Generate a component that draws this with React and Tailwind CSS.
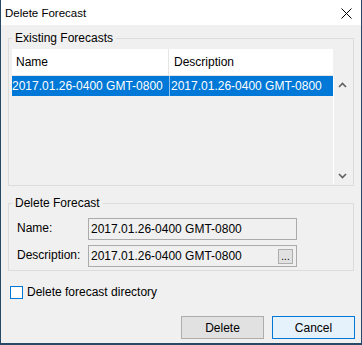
import React from "react";

function Chevron({ up }) {
  return (
    <svg width="9" height="6" viewBox="0 0 9 6">
      <polyline
        points={up ? "1,5 4.5,1.5 8,5" : "1,1 4.5,4.5 8,1"}
        fill="none"
        stroke="#606060"
        strokeWidth="1.6"
      />
    </svg>
  );
}

export default function App() {
  const font = { fontFamily: '"Liberation Sans", Arial, sans-serif' };
  return (
    <div
      className="w-[362px] h-[345px] flex flex-col bg-[#f0f0f0] border-l border-r border-b-2 border-[#264a66] text-[12px] text-black overflow-hidden"
      style={font}
    >
      {/* Title bar */}
      <div className="h-[25px] shrink-0 bg-white flex items-center justify-between pl-[4px] pr-[9px]">
        <span className="text-[11.5px] leading-[14px]">Delete Forecast</span>
        <svg width="11" height="11" viewBox="0 0 11 11" className="mt-[2px]">
          <path d="M0.5 0.5 L10.5 10.5 M10.5 0.5 L0.5 10.5" stroke="#000" strokeWidth="1" fill="none" />
        </svg>
      </div>

      {/* Existing Forecasts */}
      <fieldset className="mt-[6px] ml-[7px] w-[346px] border border-[#dcdcdc] pl-[3px] pr-[3px] pt-[4px] pb-[1px]">
        <legend className="px-[3px] leading-[14px]">Existing Forecasts</legend>
        <div className="h-[135px] flex">
          <div className="w-[321px] flex flex-col">
            <div className="h-[27px] flex bg-white border-b border-[#e5e5e5]">
              <div className="w-[157px] border-r border-[#e5e5e5] pl-[4px] flex items-center">Name</div>
              <div className="flex-1 pl-[5px] flex items-center">Description</div>
            </div>
            <div className="h-[20px] flex bg-[#0078d7] text-white">
              <div className="w-[158px] border-r border-[#8fc1ea] flex items-center whitespace-nowrap">
                2017.01.26-0400 GMT-0800
              </div>
              <div className="flex-1 pl-[1px] flex items-center whitespace-nowrap">
                2017.01.26-0400 GMT-0800
              </div>
            </div>
          </div>
          <div className="w-[17px] flex flex-col">
            <div className="h-[27px]" />
            <div className="flex-1 border-l border-white flex flex-col justify-between">
              <div className="h-[17px] flex items-center justify-center">
                <Chevron up />
              </div>
              <div className="h-[17px] flex items-center justify-center">
                <Chevron />
              </div>
            </div>
          </div>
        </div>
      </fieldset>

      {/* Delete Forecast group */}
      <fieldset className="mt-[10px] ml-[7px] w-[346px] border border-[#dcdcdc] pl-[3px] pr-[3px] pt-[8px] pb-[3px]">
        <legend className="px-[3px] leading-[14px]">Delete Forecast</legend>
        <div className="pl-[5px] flex flex-col gap-[5px]">
          <div className="flex items-center">
            <span className="w-[71px] pb-[2px]">Name:</span>
            <div className="w-[209px] h-[22px] border border-[#ababab] bg-[#f0f0f0] pl-[2px] flex items-center whitespace-nowrap">
              2017.01.26-0400 GMT-0800
            </div>
          </div>
          <div className="flex items-center">
            <span className="w-[71px] pb-[2px]">Description:</span>
            <div className="w-[209px] h-[22px] border border-[#ababab] bg-[#f0f0f0] pl-[2px] pr-[3px] flex items-center justify-between whitespace-nowrap">
              <span>2017.01.26-0400 GMT-0800</span>
              <div className="w-[15px] h-[15px] border border-[#adadad] bg-[#e1e1e1] flex items-end justify-center pb-[1px] text-[10px] leading-[10px]">
                ...
              </div>
            </div>
          </div>
        </div>
      </fieldset>

      {/* Checkbox */}
      <div className="mt-[14px] ml-[9px] flex items-center gap-[4px]">
        <div className="w-[13px] h-[13px] border border-[#0078d7] bg-white" />
        <span className="leading-[14px]">Delete forecast directory</span>
      </div>

      {/* Buttons */}
      <div className="mt-[17px] flex justify-end gap-[8px] pr-[6px]">
        <div className="w-[83px] h-[23px] border border-[#adadad] bg-[#e1e1e1] flex items-center justify-center">
          Delete
        </div>
        <div className="w-[83px] h-[23px] border border-[#0078d7] bg-[#e5f1fb] flex items-center justify-center">
          Cancel
        </div>
      </div>
    </div>
  );
}
